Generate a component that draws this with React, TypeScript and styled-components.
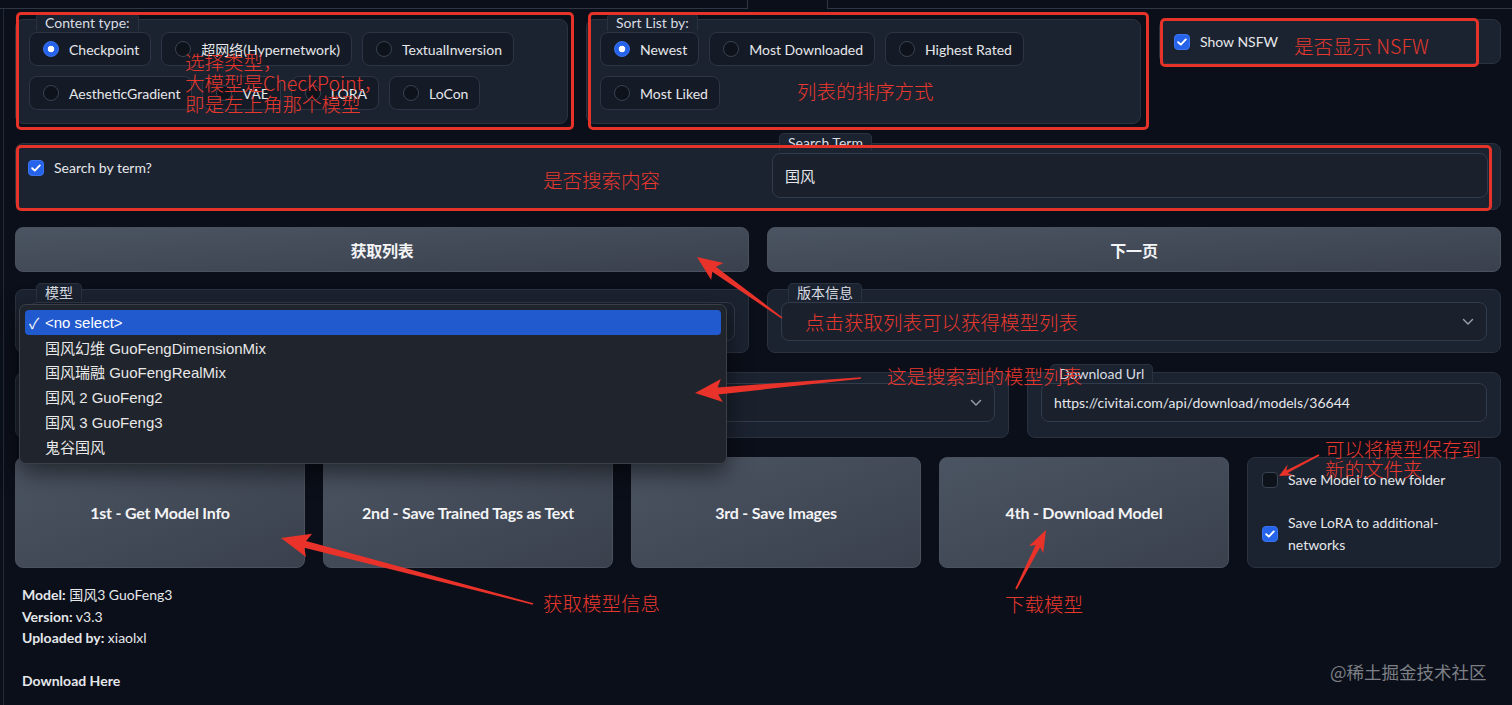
import React from 'react';
import styled, {createGlobalStyle} from 'styled-components';

const GlobalStyle = createGlobalStyle`
  * { box-sizing: border-box; }
  html, body { margin: 0; padding: 0; background: #0b0f19; }
  body {
    font-family: Lato, "Noto Sans CJK SC", sans-serif;
    font-size: 14px;
    color: #e5e7eb;
  }
`;

const Page = styled.div`
  position: relative;
  width: 1512px;
  height: 705px;
  overflow: hidden;
  background: #0b0f19;
`;

const TabStrip = styled.div`
  display: flex;
  height: 9px;
`;
const TabLine = styled.div<{$w?: number; $open?: boolean}>`
  ${p => (p.$w ? `width: ${p.$w}px;` : 'flex: 1;')}
  ${p => (p.$open
    ? 'border-left: 1px solid #2f3745; border-right: 1px solid #2f3745;'
    : 'border-bottom: 1px solid #2f3745;')}
`;

const Panel = styled.div`
  margin-left: 3px;
  height: 696px;
  border-left: 1px solid #232a37;
  padding: 10px 11px 0 11px;
  display: flex;
  flex-direction: column;
`;

const Block = styled.div`
  position: relative;
  background: #1c2330;
  border: 1px solid #2a3240;
  border-radius: 8px;
`;

const BlockLabel = styled.span<{$left?: number; $top?: number}>`
  position: absolute;
  left: ${p => p.$left ?? 20}px;
  top: ${p => p.$top ?? -7}px;
  height: 18px;
  line-height: 18px;
  padding: 0 8px;
  font-size: 14px;
  color: #d9dde3;
  background: #1c2330;
  border: 1px solid #2a3240;
  border-bottom: none;
  border-radius: 5px 5px 0 0;
  white-space: nowrap;
`;

const TopRow = styled.div`
  display: grid;
  grid-template-columns: 553px 555px 1fr;
  column-gap: 18px;
  align-items: start;
`;

const GroupBlock = styled(Block)`
  height: 105px;
  padding: 12px 13px;
`;

const Options = styled.div`
  display: flex;
  flex-wrap: wrap;
  gap: 10px;
`;

const Option = styled.div`
  display: flex;
  align-items: center;
  gap: 10px;
  height: 34px;
  padding: 0 11px 0 13px;
  background: #151b26;
  border: 1px solid #2d3545;
  border-radius: 8px;
  white-space: nowrap;
`;

const Radio = styled.span<{$on?: boolean}>`
  width: 16px;
  height: 16px;
  flex: none;
  border-radius: 50%;
  ${p => (p.$on
    ? 'background: radial-gradient(circle, #fff 0 3px, #2563eb 3.6px); border: 1px solid #3b74f0;'
    : 'background: #0d121b; border: 1px solid #3a4352;')}
`;

const Check = styled.span<{$on?: boolean}>`
  width: 16px;
  height: 16px;
  flex: none;
  border-radius: 4px;
  display: flex;
  align-items: center;
  justify-content: center;
  ${p => (p.$on
    ? 'background: #2563eb; border: 1px solid #3b74f0;'
    : 'background: #0d121b; border: 1px solid #3a4352;')}
`;

const CheckRow = styled.div`
  display: flex;
  align-items: center;
  gap: 10px;
  line-height: 22px;
`;

const NsfwBlock = styled(Block)`
  height: 45px;
  display: flex;
  align-items: center;
  padding: 0 14px;
`;

const SearchBlock = styled(Block)`
  margin-top: 19px;
  height: 67px;
  display: grid;
  grid-template-columns: 751px 1fr;
`;

const CheckCell = styled.div`
  padding: 13px 12px;
  align-self: start;
`;

const TermCell = styled.div`
  position: relative;
  padding: 9px 12px 0 5px;
`;

const Field = styled.div<{$h?: number; $size?: number}>`
  height: ${p => p.$h ?? 39}px;
  display: flex;
  align-items: center;
  justify-content: space-between;
  padding: 0 12px;
  background: #1a212d;
  border: 1px solid #323b4b;
  border-radius: 8px;
  font-size: ${p => p.$size ?? 14}px;
  color: #e5e7eb;
`;

const TwoCols = styled.div<{$mt: number; $h: number}>`
  margin-top: ${p => p.$mt}px;
  height: ${p => p.$h}px;
  display: grid;
  grid-template-columns: 1fr 1fr;
  column-gap: 18px;
`;

const Button = styled.button`
  height: 100%;
  border: 1px solid #4a525f;
  border-radius: 8px;
  background: linear-gradient(to bottom right, #4b5462, #3a414d);
  color: #f3f4f6;
  font-family: Lato, "Noto Sans CJK SC", sans-serif;
  font-weight: 700;
  font-size: 16px;
  letter-spacing: -0.2px;
  cursor: pointer;
`;

const SelectBlock = styled(Block)`
  padding: 12px 13px 11px 13px;
`;

const UrlRow = styled.div`
  margin-top: 20px;
  height: 66px;
  display: grid;
  grid-template-columns: 994px 1fr;
  column-gap: 18px;
`;

const UrlBlock = styled(Block)`
  padding: 10px 13px 0 13px;
`;

const ActionRow = styled.div`
  margin-top: 19px;
  height: 110px;
  display: grid;
  grid-template-columns: repeat(4, 290px) 1fr;
  column-gap: 18px;
`;

const OptionsBlock = styled(Block)`
  padding: 11px 14px;
  display: flex;
  flex-direction: column;
  gap: 21px;
  font-size: 14px;
`;

const Info = styled.div`
  margin-top: 17px;
  padding-left: 7px;
  line-height: 21.5px;
  font-size: 14px;
  color: #e5e7eb;
  b { font-weight: 700; }
`;

const Menu = styled.div`
  position: absolute;
  left: 19px;
  top: 304px;
  width: 708px;
  padding: 5px 5px 4px;
  background: #20242c;
  border: 1px solid #3a3f48;
  border-radius: 7px;
  box-shadow: 0 8px 24px rgba(0, 0, 0, 0.55);
  font-family: "Liberation Sans", "Noto Sans CJK SC", sans-serif;
  font-size: 15px;
  color: #e8e8e8;
  z-index: 5;
`;

const MenuItem = styled.div<{$active?: boolean}>`
  position: relative;
  height: 24.8px;
  display: flex;
  align-items: center;
  padding-left: 20px;
  border-radius: 4px;
  ${p => p.$active && 'background: #2159cf; color: #fff;'}
  > i {
    position: absolute;
    left: 4px;
    font-style: normal;
  }
`;

const Frame = styled.div<{$x: number; $y: number; $w: number; $h: number}>`
  position: absolute;
  left: ${p => p.$x}px;
  top: ${p => p.$y}px;
  width: ${p => p.$w}px;
  height: ${p => p.$h}px;
  border: 3px solid #e5332a;
  border-radius: 5px;
  pointer-events: none;
  z-index: 6;
`;

const Note = styled.div<{$x: number; $y: number; $lh?: number}>`
  position: absolute;
  left: ${p => p.$x}px;
  top: ${p => p.$y}px;
  font-family: "Noto Sans CJK SC", sans-serif;
  font-weight: 300;
  font-size: 19.5px;
  line-height: ${p => p.$lh ?? 22}px;
  color: #e8382e;
  white-space: nowrap;
  z-index: 7;
`;

const Watermark = styled.div`
  position: absolute;
  left: 1330px;
  top: 661px;
  font-family: "Noto Sans CJK SC", sans-serif;
  font-size: 17.5px;
  line-height: 22px;
  color: #7c7f85;
`;

const Overlay = styled.svg`
  position: absolute;
  left: 0;
  top: 0;
  z-index: 8;
  pointer-events: none;
`;

const Chevron = () => (
  <svg width="12" height="8" viewBox="0 0 12 8">
    <path d="M1.5 1.5 L6 6 L10.5 1.5" fill="none" stroke="#9ca3af" strokeWidth="1.4" strokeLinecap="round" strokeLinejoin="round"/>
  </svg>
);

const Tick = () => (
  <svg width="10" height="8" viewBox="0 0 10 8">
    <path d="M1.2 4.2 L3.8 6.6 L8.8 1.4" fill="none" stroke="#fff" strokeWidth="1.9" strokeLinecap="round" strokeLinejoin="round"/>
  </svg>
);

type Arrow = {x1: number; y1: number; x2: number; y2: number; w: number; hl: number; hw: number};

const arrows: Arrow[] = [
  {x1: 782, y1: 318, x2: 697, y2: 257, w: 6, hl: 25, hw: 21},
  {x1: 861, y1: 378, x2: 695, y2: 393, w: 7, hl: 27, hw: 23},
  {x1: 533, y1: 604, x2: 281, y2: 538, w: 7, hl: 29, hw: 24},
  {x1: 1016, y1: 589, x2: 1046, y2: 530, w: 5, hl: 22, hw: 16},
  {x1: 1319, y1: 455, x2: 1279, y2: 476, w: 3, hl: 13, hw: 12},
];

const arrowPoints = (a: Arrow) => {
  const dx = a.x2 - a.x1;
  const dy = a.y2 - a.y1;
  const len = Math.hypot(dx, dy);
  const ux = dx / len, uy = dy / len;
  const nx = -uy, ny = ux;
  const bx = a.x2 - ux * a.hl, by = a.y2 - uy * a.hl;
  const notch = 4;
  const p = (x: number, y: number) => `${x.toFixed(1)},${y.toFixed(1)}`;
  return [
    p(a.x1 + nx * 0.8, a.y1 + ny * 0.8),
    p(bx + ux * notch + nx * a.w / 2, by + uy * notch + ny * a.w / 2),
    p(bx + nx * a.hw / 2, by + ny * a.hw / 2),
    p(a.x2, a.y2),
    p(bx - nx * a.hw / 2, by - ny * a.hw / 2),
    p(bx + ux * notch - nx * a.w / 2, by + uy * notch - ny * a.w / 2),
    p(a.x1 - nx * 0.8, a.y1 - ny * 0.8),
  ].join(' ');
};

const contentTypes = ['Checkpoint', '超网络(Hypernetwork)', 'TextualInversion', 'AestheticGradient', 'VAE', 'LORA', 'LoCon'];
const sortModes = ['Newest', 'Most Downloaded', 'Highest Rated', 'Most Liked'];
const models = ['国风幻维 GuoFengDimensionMix', '国风瑞融 GuoFengRealMix', '国风 2 GuoFeng2', '国风 3 GuoFeng3', '鬼谷国风'];

const App = () => {
  return (
    <Page>
      <GlobalStyle/>
      <TabStrip>
        <TabLine $w={747}/>
        <TabLine $w={81} $open/>
        <TabLine/>
      </TabStrip>
      <Panel>
        <TopRow>
          <GroupBlock>
            <BlockLabel>Content type:</BlockLabel>
            <Options>
              {contentTypes.map((t, i) => (
                <Option key={t}><Radio $on={i === 0}/>{t}</Option>
              ))}
            </Options>
          </GroupBlock>
          <GroupBlock>
            <BlockLabel>Sort List by:</BlockLabel>
            <Options>
              {sortModes.map((t, i) => (
                <Option key={t}><Radio $on={i === 0}/>{t}</Option>
              ))}
            </Options>
          </GroupBlock>
          <NsfwBlock>
            <CheckRow><Check $on><Tick/></Check>Show NSFW</CheckRow>
          </NsfwBlock>
        </TopRow>

        <SearchBlock>
          <CheckCell>
            <CheckRow><Check $on><Tick/></Check>Search by term?</CheckRow>
          </CheckCell>
          <TermCell>
            <BlockLabel $left={12} $top={-11}>Search Term</BlockLabel>
            <Field $h={45} $size={15}>国风</Field>
          </TermCell>
        </SearchBlock>

        <TwoCols $mt={17} $h={45}>
          <Button>获取列表</Button>
          <Button>下一页</Button>
        </TwoCols>

        <TwoCols $mt={17} $h={63}>
          <SelectBlock>
            <BlockLabel>模型</BlockLabel>
            <Field><span/><Chevron/></Field>
          </SelectBlock>
          <SelectBlock>
            <BlockLabel>版本信息</BlockLabel>
            <Field><span/><Chevron/></Field>
          </SelectBlock>
        </TwoCols>

        <UrlRow>
          <UrlBlock>
            <Field><span/><Chevron/></Field>
          </UrlBlock>
          <UrlBlock>
            <BlockLabel $left={22} $top={-9}>Download Url</BlockLabel>
            <Field>https://civitai.com/api/download/models/36644</Field>
          </UrlBlock>
        </UrlRow>

        <ActionRow>
          <Button>1st - Get Model Info</Button>
          <Button>2nd - Save Trained Tags as Text</Button>
          <Button>3rd - Save Images</Button>
          <Button>4th - Download Model</Button>
          <OptionsBlock>
            <CheckRow><Check/>Save Model to new folder</CheckRow>
            <CheckRow><Check $on><Tick/></Check><span>Save LoRA to additional-networks</span></CheckRow>
          </OptionsBlock>
        </ActionRow>

        <Info>
          <div><b>Model:</b> 国风3 GuoFeng3</div>
          <div><b>Version:</b> v3.3</div>
          <div><b>Uploaded by:</b> xiaolxl</div>
          <div>&nbsp;</div>
          <div><b>Download Here</b></div>
        </Info>
      </Panel>

      <Menu>
        <MenuItem $active><i>✓</i>&lt;no select&gt;</MenuItem>
        {models.map(m => <MenuItem key={m}>{m}</MenuItem>)}
      </Menu>

      <Frame $x={16} $y={12} $w={558} $h={118}/>
      <Frame $x={588} $y={12} $w={561} $h={118}/>
      <Frame $x={1160} $y={18} $w={319} $h={49}/>
      <Frame $x={16} $y={145} $w={1476} $h={66}/>

      <Note $x={185} $y={51} $lh={21}>选择类型，<br/>大模型是CheckPoint，<br/>即是左上角那个模型</Note>
      <Note $x={797} $y={80}>列表的排序方式</Note>
      <Note $x={1294} $y={35}>是否显示 NSFW</Note>
      <Note $x={543} $y={169}>是否搜索内容</Note>
      <Note $x={805} $y={311}>点击获取列表可以获得模型列表</Note>
      <Note $x={887} $y={365}>这是搜索到的模型列表</Note>
      <Note $x={1325} $y={439} $lh={20}>可以将模型保存到<br/>新的文件夹</Note>
      <Note $x={543} $y={592}>获取模型信息</Note>
      <Note $x={1005} $y={593}>下载模型</Note>

      <Overlay width="1512" height="705">
        {arrows.map((a, i) => (
          <polygon key={i} points={arrowPoints(a)} fill="#e8322a"/>
        ))}
      </Overlay>

      <Watermark>@稀土掘金技术社区</Watermark>
    </Page>
  );
};

export default App;
